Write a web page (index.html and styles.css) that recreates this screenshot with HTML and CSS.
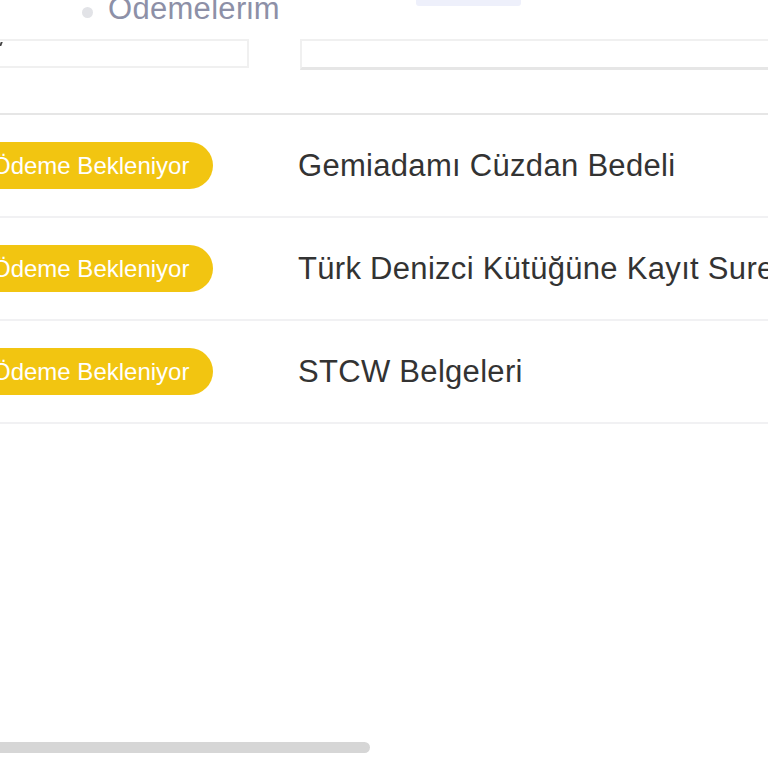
FILE: index.html
```html
<!DOCTYPE html>
<html lang="tr">
<head>
<meta charset="utf-8">
<title>Ödemelerim</title>
<link rel="stylesheet" href="styles.css">
</head>
<body>
<div class="page">
  <div class="topnav">
    <span class="dot"></span>
    <span class="navlabel">Ödemelerim</span>
    <span class="tabbar"></span>
  </div>
  <div class="filters">
    <div class="field field-a"><span class="tick"></span></div>
    <div class="field field-b"></div>
  </div>
  <div class="table">
    <div class="row">
      <div class="cell-status"><span class="badge">Ödeme Bekleniyor</span></div>
      <div class="cell-name">Gemiadamı Cüzdan Bedeli</div>
    </div>
    <div class="row">
      <div class="cell-status"><span class="badge">Ödeme Bekleniyor</span></div>
      <div class="cell-name">Türk Denizci Kütüğüne Kayıt Sure</div>
    </div>
    <div class="row">
      <div class="cell-status"><span class="badge">Ödeme Bekleniyor</span></div>
      <div class="cell-name">STCW Belgeleri</div>
    </div>
  </div>
  <div class="scrolltrack"><div class="scrollthumb"></div></div>
</div>
</body>
</html>
```
FILE: styles.css
```css
html, body {
  margin: 0;
  padding: 0;
  background: #ffffff;
}
body {
  width: 768px;
  height: 768px;
  overflow: hidden;
  font-family: "Liberation Sans", Arial, sans-serif;
}
.page {
  width: 768px;
}
.topnav {
  display: flex;
  align-items: center;
  height: 31px;
  margin-top: -7px;
  padding-left: 82px;
}
.dot {
  width: 11px;
  height: 11px;
  border-radius: 50%;
  background: #e2e3e7;
  margin-top: 7px;
  flex: none;
}
.navlabel {
  margin-left: 15px;
  font-size: 31px;
  line-height: 31px;
  letter-spacing: 0.3px;
  color: #8d90a7;
  white-space: nowrap;
}
.tabbar {
  align-self: flex-start;
  width: 105px;
  height: 13px;
  margin-left: 136px;
  background: #eef0fb;
  border-radius: 0 0 3px 3px;
}
.filters {
  display: flex;
  gap: 51px;
  margin-top: 15px;
  width: 840px;
  margin-left: -50px;
}
.field {
  box-sizing: border-box;
  height: 29px;
  border: 2px solid #f0f0f0;
  background: #fff;
}
.field-a {
  width: 299px;
  flex: none;
  position: relative;
}
.tick {
  position: absolute;
  left: 48px;
  top: 1px;
  width: 2px;
  height: 4px;
  background: #444;
  transform: skewX(-20deg);
}
.field-b {
  flex: 1;
  height: 31px;
  border-bottom: 3px solid #e6e6e6;
}
.table {
  margin-top: 43px;
  margin-left: -32px;
  width: 900px;
  border-top: 2px solid #e6e6e6;
}
.row {
  display: flex;
  align-items: center;
  height: 101px;
  border-bottom: 2px solid #f1f1f3;
}
.cell-status {
  width: 330px;
  flex: none;
}
.badge {
  display: inline-block;
  height: 47px;
  line-height: 47px;
  padding: 0 24px;
  border-radius: 24px;
  background: #f2c511;
  color: #ffffff;
  font-size: 24px;
  white-space: nowrap;
}
.cell-name {
  font-size: 31px;
  letter-spacing: 0.3px;
  color: #333333;
  white-space: nowrap;
}
.scrolltrack {
  margin-top: 318px;
  height: 11px;
}
.scrollthumb {
  width: 380px;
  height: 11px;
  margin-left: -10px;
  border-radius: 6px;
  background: #d6d6d6;
}
```
